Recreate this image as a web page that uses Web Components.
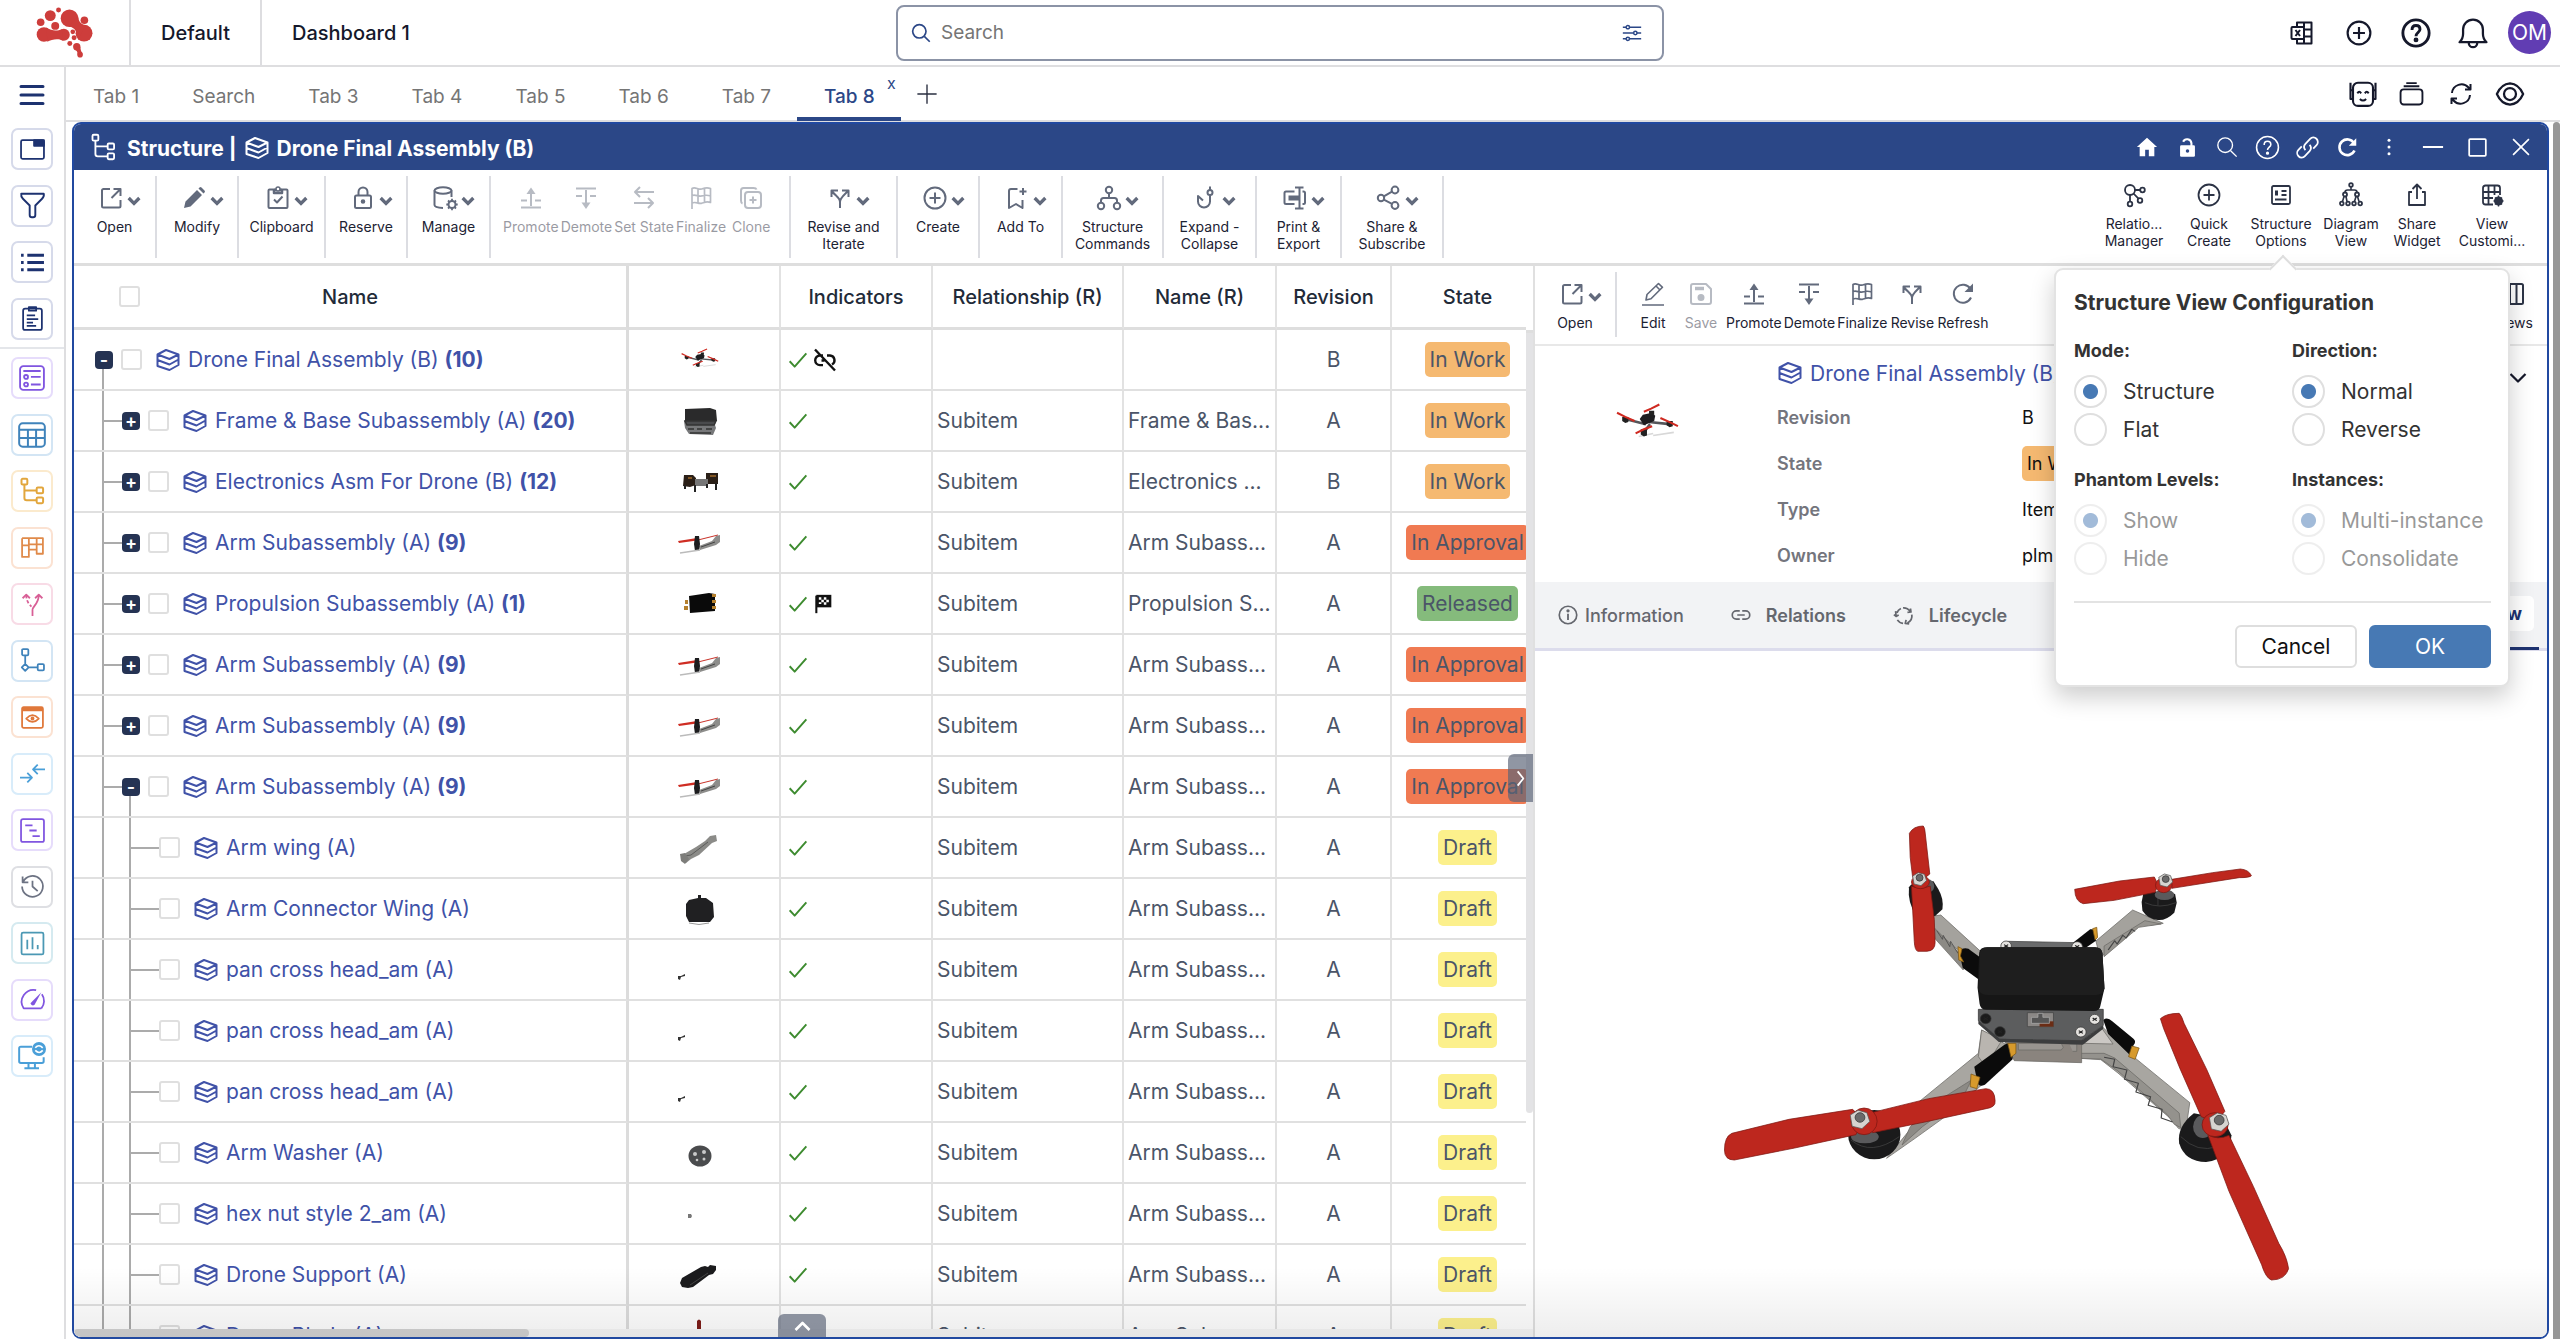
<!DOCTYPE html>
<html lang="en">
<head>
<meta charset="utf-8">
<title>Structure | Drone Final Assembly (B)</title>
<style>
html,body{margin:0;height:100%;background:#fff}
body{font-family:Inter,"Liberation Sans",sans-serif;color:#1c2233;overflow:hidden}
</style>
</head>
<body>
<plm-app></plm-app>
<script>
const RESET = `*{box-sizing:border-box}
button{font:inherit;color:inherit;background:none;border:0;padding:0;margin:0;cursor:pointer}
button:disabled{cursor:default}
a{color:inherit;text-decoration:none}`;

class Part extends HTMLElement {
  connectedCallback() {
    if (this.shadowRoot) return;
    const root = this.attachShadow({ mode: 'open' });
    const t = document.createElement('template');
    t.innerHTML = `<style>${RESET}${this.css()}</style>${this.view()}`;
    root.append(t.content.cloneNode(true));
  }
  css() { return ''; }
  view() { return ''; }
  at(n, d = '') { return this.getAttribute(n) ?? d; }
}

/* ---------- icons: 24 x 24 grid, stroke in currentColor ---------- */
const GLYPH = {
  open: '<path d="M11 3H4.500a1.500 1.500 0 0 0-1.500 1.500V20a1.500 1.500 0 0 0 1.500 1.500H20a1.500 1.500 0 0 0 1.500-1.500v-6M14.500 3h7v7M21 3.500l-8.500 8.500"/>',
  chev: '<path d="M4 12l8 8 8-8" stroke-width="5" stroke-linejoin="miter"/>',
  down: '<path d="M2 8l10 10L22 8" stroke-width="3"/>',
  up: '<path d="M4 16l8-8 8 8" stroke-width="3"/>',
  right: '<path d="M8 2l8 10-8 10" stroke-width="2.500"/>',
  pencil: '<path d="M2 22l1.500-6.500L15 4l5 5L8.500 20.500z M16.500 2.500l1-1q1-1 2 0l3 3q1 1 0 2l-1 1z" fill="currentColor" stroke="none"/>',
  clip: '<rect x="2.500" y="3.500" width="19" height="18.500" rx="1"/><path d="M8 3.500V7h8V3.500M8 4h8" stroke-width="2.500"/><circle cx="12" cy="3" r="2" fill="#fff" stroke-width="1.500"/><path d="M8 13.500l3 3 5.500-6"/>',
  lock: '<rect x="4" y="9.500" width="16" height="12.500" rx="1.500"/><path d="M7.500 9.500V6a4.500 4.500 0 0 1 9 0v3.500"/><circle cx="12" cy="15.500" r="1.300" fill="currentColor"/>',
  manage: '<ellipse cx="10" cy="4.500" rx="8.500" ry="3.200"/><path d="M1.500 4.500v14.500c0 1.500 3 2.800 8.500 3M18.500 4.500V11"/><circle cx="19" cy="18.500" r="3.500"/><path d="M19 12.800v2.200m0 7v2.200m-5.700-5.700h2.200m7 0h2.200m-9.700-4l1.500 1.500m5 5l1.500 1.500m0-8l-1.500 1.500m-5 5l-1.500 1.500" stroke-width="1.800"/>',
  promote: '<path d="M12 20V4" /><path d="M7.500 8L12 1.500 16.500 8z" fill="currentColor" stroke="none"/><path d="M2 14.500h6m8 0h6M2 21.500h20"/>',
  demote: '<path d="M12 4v14"/><path d="M7.500 16.500L12 23l4.500-6.500z" fill="currentColor" stroke="none"/><path d="M2 2.500h20M2 10h6m8 0h6"/>',
  setstate: '<path d="M22 6H3m5-5L3 6l5 5M2 17h19m-5-5l5 5-5 5"/>',
  flag: '<path d="M3 23V2.500c3.500-2 6 1.500 9.500.500 3-1 5-2 9-.500v14c-4-1.500-6 0-9 .800-3.500.700-6-2-9.500-.300M3 9.500c4-1.500 6 1.500 9.500.500s5-1.500 9 0M9 2.500v14M15.500 2.500v14" stroke-width="1.700"/>',
  clone: '<rect x="6" y="6" width="16" height="16" rx="3"/><path d="M3.500 17.500Q2 17 2 14.500V4.500Q2 2 4.500 2h10q2.500 0 3 1.500M14 10.500v7M10.500 14h7"/>',
  revise: '<path d="M12 22v-6c0-4-3-5-8-10.500M12 16c0-4 3-6 8-11M3.500 11V4.500H10M14 4.500h6.500V11"/>',
  plusc: '<circle cx="12" cy="12" r="10.500"/><path d="M12 6.500v11M6.500 12h11"/>',
  addto: '<path d="M12.500 3H6a2 2 0 0 0-2 2v17l7-4 6.500 4v-8M18 2v7m-3.500-3.500h7"/>',
  strc: '<circle cx="12" cy="4" r="3.200"/><circle cx="4" cy="20" r="3.200"/><circle cx="20" cy="20" r="3.200"/><path d="M12 7v5M4 16.500v-2q0-2.500 2.500-2.500h11q2.500 0 2.500 2.500v2"/>',
  hook: '<circle cx="16" cy="6.500" r="2.500"/><path d="M16 4V.500M16 9v6.500a6 6 0 0 1-12 0V10l5 4.500"/>',
  print: '<path d="M11.500 5.500H3Q1.500 5.500 1.500 7v9.500Q1.500 18 3 18h8.500M19.500 5.500h1Q22 5.500 22 7v9.500q0 1.500-1.500 1.500h-1M16.500 1.500v21M12 1.500h8.500M12 22.500h8.500" /><path d="M5.500 9.500h11v5h-11z" fill="currentColor" stroke="none"/>',
  share: '<circle cx="4" cy="12" r="3.200"/><circle cx="18" cy="4" r="3.400"/><circle cx="18" cy="19.500" r="3.400"/><path d="M6.800 10.400l8.200-4.700M6.800 13.600l8.200 4.200"/>',
  relman: '<circle cx="8" cy="7" r="5"/><circle cx="20.500" cy="7" r="2.300"/><circle cx="8" cy="21" r="2.300"/><circle cx="18" cy="17.500" r="2.300"/><path d="M13 7h5M8 12v6.500M11.500 10.500l5 5.200"/>',
  options: '<rect x="3" y="3" width="18" height="18" rx="1.500"/><path d="M7.500 7.500v5" stroke-width="3"/><path d="M12.500 8h5M12.500 12h5M6 16.500h11.500"/>',
  diagram: '<circle cx="12" cy="2" r="1.800"/><circle cx="6" cy="11.500" r="2"/><circle cx="18" cy="11.500" r="2"/><circle cx="2.800" cy="20.500" r="1.800"/><circle cx="9" cy="20.500" r="1.800"/><circle cx="15" cy="20.500" r="1.800"/><circle cx="21.200" cy="20.500" r="1.800"/><path d="M12 4v3M6 9.500Q6 7 8.500 7h7Q18 7 18 9.500M3.500 18.500l1.500-5m3 5l-1-5m8.500 5l1.500-5m3 5l-1.500-5" stroke-width="1.600"/>',
  shareup: '<path d="M7 9H4v13h16V9h-3M12 16V2M7.500 6L12 1.500 16.500 6"/>',
  viewcus: '<path d="M13 21.500H5.500Q3 21.500 3 19V5Q3 2.500 5.500 2.500h12Q20 2.500 20 5v7M3 9h17M3 15h10M8.500 2.500v19M14.500 2.500V12"/><circle cx="18.500" cy="18" r="3" stroke-width="3"/><path d="M18.500 12.500v11M13.500 18h10M15 14.500l7 7M22 14.500l-7 7" stroke-width="1.400"/>',
  excel: '<path d="M7 6V1.500h14.500v21H7V18M14 1.500v5M14 17.500v5M13 8.500h8.500M13 15.500h8.500M14 8v8"/><rect x="1.500" y="6" width="12.500" height="12" rx="1"/><path d="M5.500 9l4.500 6m0-6l-4.500 6"/>',
  help: '<circle cx="12" cy="12" r="10.500"/><path d="M8.800 9.500q0-3.500 3.200-3.500t3.200 3c0 2.500-3.200 2.800-3.200 5.500"/><circle cx="12" cy="17.500" r=".8" fill="currentColor"/>',
  bell: '<path d="M2.500 18.500h19c-2-2-2.500-3.500-2.500-6V9.500a7 7 0 0 0-14 0v3c0 2.500-.500 4-2.500 6zM9 19a3 3 0 0 0 6 0"/>',
  robot: '<rect x="4" y="3" width="16" height="18.500" rx="4"/><path d="M4 9H2v7h2M20 9h2v7h-2M2 9V3M22 9V3"/><path d="M7.500 11.500q1.500-2.500 3 0M13.500 11.500q1.500-2.500 3 0M9.500 16q2.500 2.500 5 0" stroke-width="1.600"/>',
  stack: '<rect x="1.500" y="8" width="21" height="14.500" rx="3"/><path d="M4.500 5h15M7 2h10"/>',
  sync: '<path d="M3 11a9.500 9.500 0 0 1 16.500-5.500L21 7M21 13a9.500 9.500 0 0 1-16.500 5.500L3 17M21.500 2v5.500H16M2.500 22v-5.500H8"/>',
  eye: '<path d="M1.500 12q3.500-8 10.500-8.500Q19 4 22.500 12 19 20 12 20.500 5 20 1.500 12z"/><circle cx="12" cy="12" r="4.800"/>',
  home: '<path d="M12 2L1 12h3v10h6v-7h4v7h6V12h3z" fill="currentColor" stroke="none"/>',
  unlock: '<rect x="3.500" y="9.500" width="17" height="13" rx="1.500" fill="currentColor" stroke="none"/><path d="M7 5.500a5 5 0 0 1 9.500 1.500v4" stroke-width="2.400"/><circle cx="12" cy="16" r="2" fill="#2b4787" stroke="none"/>',
  search: '<circle cx="10" cy="10" r="8"/><path d="M16 16l6.500 6.500"/>',
  chain: '<path d="M10 14.500a4.500 4.500 0 0 1 0-6l4.500-4.800a4.300 4.300 0 0 1 6.200 6L17.500 13M14 9.500a4.500 4.500 0 0 1 0 6l-4.500 4.800a4.300 4.300 0 0 1-6.200-6L6.500 11"/>',
  refresh: '<path d="M20 15.500A9 9 0 1 1 19.500 7"/><path d="M22 1.500V10h-8.500z" fill="currentColor" stroke="none"/>',
  dots: '<g fill="currentColor" stroke="none"><circle cx="12" cy="4" r="1.800"/><circle cx="12" cy="12" r="1.800"/><circle cx="12" cy="20" r="1.800"/></g>',
  min: '<path d="M1 12h22"/>',
  max: '<rect x="2.500" y="2.500" width="19" height="19" rx="1"/>',
  close: '<path d="M2.500 2.500l19 19M21.500 2.500l-19 19"/>',
  plus: '<path d="M12 1.500v21M1.500 12h21"/>',
  part: '<path d="M1.500 6.500L10 2l12.500 4.500L13.500 11zM1.500 6.500V18l12 4 9-5V6.500M1.500 12l12 4.500 9-5"/>',
  tree: '<rect x="3" y="1.500" width="5" height="5" rx="1"/><rect x="16" y="9" width="5.500" height="5" rx="1"/><rect x="16" y="17.500" width="5.500" height="5" rx="1"/><path d="M5.500 6.500V18q0 2 2 2H16M5.500 11.500H16"/>',
  filter: '<path d="M2 1.500h20c.500 2 0 3-1.500 4.500L14.500 12v8.500q0 2-2 2h-1q-2 0-2-2V12L3.500 6Q1.500 4 2 1.500z"/>',
  sliders: '<path d="M1 5h4m4 0h14M1 12h13m4 0h5M1 19h4m4 0h14"/><circle cx="7" cy="5" r="2"/><circle cx="16" cy="12" r="2"/><circle cx="7" cy="19" r="2"/>',
  window: '<rect x="1" y="3" width="22" height="18" rx="1.500"/><path d="M13.500 3H23v5.500h-9.500z" fill="currentColor"/>',
  list: '<path d="M7 5h16M7 12h16M7 19h16" stroke-width="2.800"/><path d="M1 5h2.500M1 12h2.500M1 19h2.500" stroke-width="2.800"/>',
  board: '<rect x="3" y="2.500" width="18" height="20.500" rx="2"/><path d="M8.500 1h7v3.500h-7zM6.500 9h8M6.500 12.500h11M6.500 16h6M6.500 19h9"/>',
  form: '<rect x="1" y="1" width="22" height="22" rx="3"/><path d="M4 5.500h16M11 11h9M11 18h9"/><circle cx="6.500" cy="11" r="1.800"/><circle cx="6.500" cy="18" r="1.800"/>',
  grid: '<rect x="1" y="2" width="22" height="20" rx="3"/><path d="M1 7.500h22M1 14.500h22M8.500 7.500V22M15.500 7.500V22"/>',
  kanban: '<path d="M2 3h20v15h-6V3M2 3v18h6.500V3M8.500 14H16M2 10h6.500M8.500 9H22"/>',
  fork: '<path d="M12 23v-6c0-3 6-6 6-14M14.500 6L18 2.500 21.500 6M2.500 6L6 2.500 9.500 6"/><path d="M6 3c0 6 3 9 5 11" stroke-dasharray="3 2"/>',
  flow: '<rect x="2" y="1" width="6" height="6" rx="1"/><rect x="17" y="15.500" width="6" height="6" rx="1"/><path d="M5 7v8.500M8.300 18.500H17M5 15.300l3.300 3.300L5 22l-3.300-3.400z"/>',
  eyebox: '<rect x="2" y="2" width="20" height="20" rx="1.500"/><path d="M2 4h20" stroke-width="4"/><path d="M6 13q6-6.500 12 0-6 6.500-12 0z"/><circle cx="12" cy="13" r="1"/>',
  merge: '<path d="M0 16h11M7 11.500l4.500 4.500L7 20.500M24 8H13M17 3.500L12.500 8l4.500 4.500"/>',
  gantt: '<rect x="1" y="1" width="22" height="22" rx="2"/><path d="M5 7h7M9 12h7M12 17.500h7"/>',
  history: '<path d="M3 7.500A10 10 0 1 1 2 12M2.500 2.500v5.500H8M12 6.500V12l5 4.500"/>',
  bars: '<rect x="1.500" y="1.500" width="21" height="21" rx="1.500"/><path d="M7 8.500v9M12 6v11.500M17 13.500v4"/>',
  gauge: '<path d="M20.500 20.500h-17A11.500 11.500 0 0 1 15.500 3M20.500 20.500A11 11 0 0 0 21 7"/><path d="M10 15.500L20.500 5 14 17q-2.500 2-4-1.500z" fill="currentColor" stroke="none"/>',
  monitor: '<path d="M12 4H2.500Q1 4 1 5.500v11Q1 18 2.500 18h18q1.500 0 1.500-1.500V13M9 18v4M14.500 18v4M5.500 22.500h12.500"/><circle cx="18" cy="6" r="6" fill="currentColor" stroke="none"/><path d="M14.800 5q3-3.500 6.400 0M21.200 7.200q-3 3.500-6.400 0" stroke="#fff" stroke-width="1.400"/>',
  menu: '<path d="M1 3.500h22M1 12h22M1 20.500h22" stroke-width="3" stroke-linecap="round"/>',
  edit: '<path d="M1 23h22M5 18l1-5.500L17.500 1.500l4 3.800L10 16.800z" stroke-width="1.600"/><path d="M15 4l4 4" stroke-width="1.600"/>',
  save: '<path d="M4 2h13l5 5v13a2 2 0 0 1-2 2H4a2 2 0 0 1-2-2V4a2 2 0 0 1 2-2z"/><path d="M6 6.500h9" stroke-width="3.500"/><circle cx="12" cy="15.500" r="2.500" fill="currentColor"/>',
  info: '<circle cx="12" cy="12" r="10.500"/><path d="M12 10.500V18" stroke-width="2.200"/><circle cx="12" cy="7" r="1" fill="currentColor"/>',
  link: '<path d="M10.500 7H6.500a5 5 0 0 0 0 10h4M13.500 7h4a5 5 0 0 1 0 10h-4M7.500 12h9"/>',
  cycle: '<path d="M3 7l.500 5.500M1 11l2.500 2 3-1.500M4.500 9A9 9 0 0 1 9 4M11.500 3.200a9 9 0 0 1 8 4M20 4l.500 4-4 .500M21.500 11a9 9 0 0 1-5 9.500M18.500 21.500l-4.500-.500 1-4M11.500 21a9 9 0 0 1-6.500-4"/>',
  check: '<path d="M2 13.500l6 6.500L22 4"/>',
  unlink: '<path d="M10 7.500H7a4.800 4.800 0 0 0 0 9.600h3M14 7.500h3a4.800 4.800 0 0 1 2 9M8.500 12.500h3M2 1.500l20 21" stroke-width="2.400"/>',
  finish: '<path d="M4 23V2" stroke-width="2.500"/><path d="M4 1h18v15H4z" fill="currentColor" stroke="none"/><path d="M7 4h3v3H7zM13 4h3v3h-3zM10 7h3v3h-3zM16 7h3v3h-3zM7 10h3v2H7zM13 10h3v3h-3z" fill="#fff" stroke="none"/>',
  views: '<rect x="2" y="2" width="20" height="20" rx="1.500"/><path d="M9 2v20M15.500 2v20"/>',
};
class UiIcon extends Part {
  css() { return `:host{display:inline-block;flex:none;width:${this.at('size', '24')}px;height:${this.at('size', '24')}px}svg{display:block;width:100%;height:100%;overflow:visible}`; }
  view() { return `<svg viewBox="0 0 24 24" fill="none" stroke="currentColor" stroke-width="${this.at('weight', '2')}" stroke-linejoin="round" aria-hidden="true">${GLYPH[this.at('name')]}</svg>`; }
}

class BrandLogo extends Part {
  css() { return ':host{display:block}svg{display:block;width:57px;height:51px}'; }
  view() {
    return `<svg viewBox="106 22 172 154" fill="#cd3d3b" role="img" aria-label="Home">
    <circle cx="174" cy="31" r="7.500"/><circle cx="149" cy="48" r="16.500"/><circle cx="120" cy="68" r="11.500"/><circle cx="164" cy="79" r="12"/><circle cx="252" cy="62" r="11.500"/>
    <circle cx="207" cy="56" r="26.500"/><circle cx="251" cy="101" r="25.500"/><path d="M233 50c2 16 8 24 22 27l-20 40c-8-20-9-32-30-36z"/>
    <circle cx="130" cy="105" r="22"/><circle cx="190" cy="106" r="18"/><path d="M138 84c16 12 34 10 46 5l4 35c-16-8-34-4-48 3z"/>
    <circle cx="217" cy="97" r="7"/><circle cx="221" cy="115" r="7.500"/><circle cx="208" cy="132" r="7.500"/>
    <circle cx="229" cy="142" r="11"/><circle cx="239" cy="166" r="8.500"/><path d="M221 149c7 3 10 8 11 16l14-3c-4-6-6-12-6-20z"/></svg>`;
  }
}

class AppHeader extends Part {
  css() {
    return `:host{display:grid;grid-template-columns:1fr 30% 1fr;align-items:center;height:67px;border-bottom:2px solid #dedee0;color:#15182b}
    .left,.right{display:flex;align-items:center;height:100%}
    .right{justify-content:flex-end;padding-right:2px}
    .logo{width:131px;height:100%;display:flex;align-items:center;justify-content:center;border-right:2px solid #dddde0}
    .left a{display:flex;align-items:center;height:100%;padding:0 30px;font-size:20px;font-weight:500}
    .left a.first{border-right:2px solid #dddde0}
    label{display:flex;align-items:center;gap:10px;height:56px;padding:0 20px 0 13px;border:2px solid #8b93a6;border-radius:8px;color:#2b4787}
    input{flex:1;border:0;outline:0;background:none;font:400 19px Inter,sans-serif;color:#222;padding:0}
    input::placeholder{color:#757575;opacity:1}
    button{width:57px;height:57px;display:flex;align-items:center;justify-content:center}
    .avatar span{width:43px;height:43px;border-radius:50%;background:#613db3;color:#fff;font-size:21px;display:flex;align-items:center;justify-content:center}`;
  }
  view() {
    return `<div class="left"><div class="logo"><brand-logo></brand-logo></div><a class="first" href="#">Default</a><a href="#">Dashboard 1</a></div>
    <label><ui-icon name="search" size="20" weight="2"></ui-icon><input type="search" placeholder="Search" aria-label="Search"><ui-icon name="sliders" size="20" weight="1.800"></ui-icon></label>
    <div class="right"><button aria-label="Export"><ui-icon name="excel" size="24"></ui-icon></button><button aria-label="Create"><ui-icon name="plusc" size="26"></ui-icon></button><button aria-label="Help"><ui-icon name="help" size="30" weight="2.300"></ui-icon></button><button aria-label="Notifications"><ui-icon name="bell" size="34" weight="1.600"></ui-icon></button><button class="avatar"><span>OM</span></button></div>`;
  }
}

class SideNav extends Part {
  css() {
    return `:host{display:flex;flex-direction:column;align-items:center;width:66px;border-right:2px solid #dedee0;padding-top:15px;color:#1d3270}
    .menu{height:26px;display:flex;align-items:center}
    .group{display:flex;flex-direction:column;justify-content:space-between}
    .top{height:212px;margin-top:20px}
    hr{width:100%;border:0;border-top:2px solid #e4e6ea;margin:7px 0 8px}
    .rest{height:720px}
    .group button{width:42px;height:42px;border:2px solid var(--b);border-radius:7px;color:var(--c);display:flex;align-items:center;justify-content:center}`;
  }
  view() {
    const b = ([n, c, l, s = 25]) => `<button style="--c:${c};--b:${l}" aria-label="${n}"><ui-icon name="${n}" size="${s}" weight="1.700"></ui-icon></button>`;
    const top = [['window', '#1d3270', '#d6daea'], ['filter', '#1d3270', '#d6daea', 27], ['list', '#1d3270', '#d6daea'], ['board', '#1d3270', '#d6daea']];
    const rest = [['form', '#8055e0', '#e6dcfb', 26], ['grid', '#3f83bb', '#d3e5f4', 28], ['tree', '#e2a63c', '#fbeacd', 28], ['kanban', '#e08a4a', '#fbe2d2'],
      ['fork', '#d85f96', '#f8dbe6'], ['flow', '#3f83bb', '#d3e5f4'], ['eyebox', '#e0783a', '#fbe2d2'], ['merge', '#4a9fd8', '#d8ecfa'], ['gantt', '#8055e0', '#e6dcfb'],
      ['history', '#6d7383', '#dedfe3'], ['bars', '#4b98b4', '#d5eaf0'], ['gauge', '#8055e0', '#e6dcfb'], ['monitor', '#4a9fd8', '#d8ecfa', 28]];
    return `<button class="menu" aria-label="Menu"><ui-icon name="menu"></ui-icon></button><div class="group top">${top.map(b).join('')}</div><hr><div class="group rest">${rest.map(b).join('')}</div>`;
  }
}

class TabStrip extends Part {
  css() {
    return `:host{display:flex;height:55px;border-bottom:2px solid #dedee0;font-size:19px;color:#757575}
    a{position:relative;padding:8px 26px 0 27px;display:flex;align-items:center;border-bottom:4px solid transparent;margin-bottom:-1px}
    a[aria-current]{color:#2b4787;border-bottom-color:#2b4787;font-weight:500}
    a button{position:absolute;right:5px;top:6px;font-size:16px;line-height:20px;font-weight:400}
    .add{padding:0 15px;color:#2a2f40;display:flex;align-items:center}
    .right{margin-left:auto;display:flex;padding-right:26px;color:#15182b}
    .right button{width:49px;display:flex;align-items:center;justify-content:center}`;
  }
  view() {
    return `${['Tab 1', 'Search', 'Tab 3', 'Tab 4', 'Tab 5', 'Tab 6', 'Tab 7'].map(t => `<a href="#">${t}</a>`).join('')}<a href="#" aria-current="page">Tab 8<button aria-label="Close tab">x</button></a>
    <button class="add" aria-label="Add tab"><ui-icon name="plus" size="22" weight="1.500"></ui-icon></button>
    <div class="right"><button aria-label="Assistant"><ui-icon name="robot" size="30" weight="1.700"></ui-icon></button><button aria-label="Collections"><ui-icon name="stack" size="25" weight="1.800"></ui-icon></button><button aria-label="Refresh"><ui-icon name="sync"></ui-icon></button><button aria-label="Preview"><ui-icon name="eye" size="30" weight="1.800"></ui-icon></button></div>`;
  }
}

class WidgetTitle extends Part {
  css() {
    return `:host{display:flex;align-items:center;height:46px;background:#2b4787;color:#fff;padding:0 4px 0 15px}
    h1{display:flex;align-items:center;gap:8px;margin:0 auto 0 10px;padding-top:2px;font-size:21px;font-weight:700}
    button{height:40px;width:44px;display:flex;align-items:center;justify-content:center}
    button.n{width:40px}`;
  }
  view() {
    const n = (i, s = 22, w = 2) => `<button class="n" aria-label="${i}"><ui-icon name="${i}" size="${s}" weight="${w}"></ui-icon></button>`;
    const w = (i, s = 20) => `<button aria-label="${i}"><ui-icon name="${i}" size="${s}"></ui-icon></button>`;
    return `<ui-icon name="tree" size="28" weight="1.600"></ui-icon><h1><span>Structure |</span><ui-icon name="part"></ui-icon><span>Drone Final Assembly (B)</span></h1>
    ${n('home')}${n('unlock', 21)}${n('search', 22, 1.500)}${n('help', 25, 1.500)}${n('chain', 25, 1.700)}${n('refresh', 21, 3)}${w('dots')}${w('min', 22)}${w('max', 21)}${w('close')}`;
  }
}

class ToolButton extends Part {
  css() {
    return `:host{display:block;min-width:48px}
    button{display:flex;flex-direction:column;align-items:center;width:100%;padding:0 1px;font-size:14px;line-height:17px;color:#1c2233;text-align:center}
    .i{display:flex;align-items:center;height:24px;margin-bottom:8px;color:${this.at('tone', '#626a7c')};gap:3px}
    .menu{padding-left:12px}
    button:disabled{opacity:.45}`;
  }
  view() {
    const menu = this.hasAttribute('menu');
    return `<button ${this.hasAttribute('disabled') ? 'disabled' : ''}><span class="i ${menu ? 'menu' : ''}"><ui-icon name="${this.at('icon')}" weight="${this.at('weight', '2')}"></ui-icon>${menu ? '<ui-icon name="chev" size="16"></ui-icon>' : ''}</span><span class="label"><slot></slot></span></button>`;
  }
}

class MainToolbar extends Part {
  css() {
    return `:host{display:flex;justify-content:space-between;height:96px;border-bottom:3px solid #dedede;background:#fff}
    .left{display:grid;grid-template-columns:83px 82px 87px 82px 83px 300px 107px 82px 83px 101px 93px 85px 102px;padding:6px 0 5px}
    .left>div{display:flex;justify-content:center;border-right:2px solid #dcdde2;padding-top:10px}
    .left .wide{justify-content:flex-start;padding-left:11px}
    .right{display:grid;grid-template-columns:78px 72px 72px 68px 64px 86px;padding:13px 12px 0 0}`;
  }
  view() {
    const g = [['open', 'Open'], ['pencil', 'Modify'], ['clip', 'Clipboard'], ['lock', 'Reserve'], ['manage', 'Manage'], 0, ['revise', 'Revise and<br>Iterate'], ['plusc', 'Create'], ['addto', 'Add To'], ['strc', 'Structure<br>Commands'], ['hook', 'Expand -<br>Collapse'], ['print', 'Print &amp;<br>Export'], ['share', 'Share &amp;<br>Subscribe']];
    const dis = [['promote', 'Promote'], ['demote', 'Demote'], ['setstate', 'Set State'], ['flag', 'Finalize'], ['clone', 'Clone']];
    const r = [['relman', 'Relatio...<br>Manager'], ['plusc', 'Quick<br>Create'], ['options', 'Structure<br>Options'], ['diagram', 'Diagram<br>View'], ['shareup', 'Share<br>Widget'], ['viewcus', 'View<br>Customi...']];
    return `<div class="left">${g.map(x => x ? `<div><tool-button menu icon="${x[0]}">${x[1]}</tool-button></div>` : `<div class="wide">${dis.map(d => `<tool-button disabled icon="${d[0]}">${d[1]}</tool-button>`).join('')}</div>`).join('')}</div>
    <div class="right">${r.map(x => `<tool-button tone="#2c3345" weight="1.800" icon="${x[0]}">${x[1]}</tool-button>`).join('')}</div>`;
  }
}

class StateBadge extends Part {
  css() {
    const c = { 'In Work': '#f5b971', 'In Approval': '#f07a52', Released: '#85bb7c', Draft: '#fcf08c' }[this.textContent.trim()];
    return `:host{display:inline-block;background:${c};border-radius:5px;padding:0 5px;line-height:35px;white-space:nowrap}`;
  }
  view() { return '<slot></slot>'; }
}

/* ---------- small part previews ---------- */
const MINI_DRONE = `<path d="M36 30l20-3M22 31l14-3" stroke="#d8d8d8" stroke-width="1.500"/><path d="M9 14l20 5M52 19l-20-2M27 27l6-8M35 8l-5 8" stroke="#55565a" stroke-width="2.500" fill="none"/><path d="M23 14l3-4 9-2 3 3-1 5-10 4z" fill="#1d1d20"/><path d="M6 12h6v5l-3 1-3-2zM49 16h6v5l-3 1-3-2zM24 24h6v6l-3 1-3-2zM32 6h5v4h-5z" fill="#222"/>
<path d="M1 8l8 4 9 4M43 13l9 4 8 4M19 28l8-4 8-3M27 7l7-3 8-4" stroke="#cf2a21" stroke-width="2" fill="none"/>`;
const THUMB = {
  drone: `<g transform="translate(11 14) scale(.62 .58)">${MINI_DRONE}</g>`,
  frame: '<path d="M15 13l25-1 6 2 1 11H15z" fill="#2a2a2b"/><path d="M14 25h32l-1 4 1 3-3 7-24-1-4-6z" fill="#77787a"/><path d="M15 25h31l-2 4H17zM18 33h6m3 0h5m4 0h6M20 37h21" fill="#4a4b4d" stroke="#333" stroke-width="1.500"/>',
  elec: '<path d="M14 18h9l3 3v7l-6 2-7-1zM36 16h12v11H36z" fill="#2a1f17"/><path d="M25 22h13v7H25z" fill="#777"/><path d="M15 28v4M25 28v7M37 27v4M46 26v7" stroke="#222" stroke-width="2"/><path d="M18 21h4M40 19h6" stroke="#a06a28" stroke-width="1.500"/>',
  arm: '<path d="M28 22l20-5" stroke="#c9332a" stroke-width="1"/><path d="M8 23l19-3v2.500L9 25z" fill="#cf2d23"/><path d="M29 28l13-5 4-5 4-1v7l-4 3-16 5z" fill="#8d8d8b"/><path d="M31 29l14-5" stroke="#444" stroke-width="1"/><path d="M25 18h4l1 8-1 7h-4l-1-7z" fill="#1c1c1e"/><path d="M10 35l20-3" stroke="#bbb" stroke-width="1.500"/>',
  prop: '<path d="M19 17l20-3 6 1v17l-25 2z" fill="#0a0a0a"/><path d="M15 21h3v4h-3zm-1 6h4v4h-4zM42 15h4v3h-4zm0 6h4v3h-4zm0 6h4v3h-4z" fill="#b5802d"/>',
  wing: '<path d="M11 32l3-1 12-7 9-6 5-5 6-1 1 6-5 2-13 12-8 4-5 4-4-2z" fill="#8b8b88"/><path d="M15 33l6-1 17-13" stroke="#5c5c5a" fill="none"/><path d="M10 31l5-1 4 6-4 5-4-3z" fill="#7d7d7a"/>',
  conn: '<path d="M28 11h3v3h5l7 5 1 14-4 5H19l-3-6V20l3-4 9-2z" fill="#202022"/><path d="M19 39q10 3 20 0" stroke="#999" fill="none"/>',
  screw: '<path d="M8 31h3l4-2v2l-4 1-1 3-2-1z" fill="#333"/>',
  washer: '<ellipse cx="30" cy="28" rx="11.500" ry="10.500" fill="#4a4b4d"/><g fill="#c9c9c9"><circle cx="25" cy="26" r="2"/><circle cx="34" cy="24" r="2"/><circle cx="27" cy="32" r="1.300"/><circle cx="34" cy="31" r="1.500"/></g>',
  nut: '<path d="M18 25h3l1 2-1 2h-3z" fill="#777"/>',
  support: '<path d="M12 28l19-11 4-1 3 1 2-2 6 1v4l-3 4-4 1-16 12-5 1-6-1-2-4z" fill="#1b1b1d"/><path d="M20 35l18-12" stroke="#444"/>',
  blade: '<path d="M27 10q2-3 4 0v20h-4z" fill="#7e1d18"/>',
};
class PartThumb extends Part {
  css() { return ':host{display:block;width:68px;height:50px;margin:0 auto}svg{display:block}'; }
  view() { return `<svg width="68" height="50" viewBox="0 0 68 50">${THUMB[this.at('kind')]}</svg>`; }
}

class StructureTable extends Part {
  css() {
    return `:host{display:flex;flex-direction:column;min-width:0;background:#fff}
    .area{display:flex;flex:1;min-height:0}
    .clip{flex:1;min-width:0;overflow:hidden}
    .vbar{width:7px}
    .vbar::before{content:"";display:block;height:64px;border-bottom:3px solid #dedede}
    .vbar i{display:block;height:780px;background:#e3e3e5;border-radius:0 0 4px 4px}
    .hbar{height:8px;background:#f6f6f6}
    .hbar i{display:block;width:455px;height:8px;border-radius:4px;background:#d3d3d3}
    table{table-layout:fixed;width:1469px;border-collapse:separate;border-spacing:0;font-size:21px;color:#4b5568}
    th{height:64px;padding:0;font-size:20px;font-weight:500;color:#222a38;border-bottom:3px solid #dedede;border-right:2px solid #e2e2e2}
    td{height:61px;padding:0 4px;border-bottom:2px solid #e0e0e0;border-right:2px solid #e2e2e2;white-space:nowrap;overflow:hidden;text-overflow:ellipsis}
    th:first-child,td:first-child{border-right:3px solid #dcdcdc}
    th:last-child,td:last-child{border-right:0}
    .c{text-align:center}
    .head{display:flex;align-items:center;padding-left:45px}
    .head span{flex:1;padding-right:66px}
    input{appearance:none;flex:none;width:21px;height:21px;margin:0;border:2px solid #dfdfdf;border-radius:3px;background:#fff}
    td.name{padding:0;overflow:visible;text-overflow:clip;--l:linear-gradient(#ababab,#ababab)}
    .n{display:flex;align-items:center;color:#4052a8}
    .n button{flex:none;width:18px;height:18px;border-radius:4px;background:#253353;color:#fff;font-size:18px;line-height:16px;font-weight:600;margin-right:8px}
    .n a{display:flex;align-items:center;gap:8px;margin-left:14px}
    .n a span{white-space:pre}
    .l1{background:var(--l) 28px 100%/2px 50% no-repeat}
    .l2{background:var(--l) 28px 0/2px 100% no-repeat,var(--l) 28px 50%/20px 2px no-repeat}
    .l2.x{background:var(--l) 28px 0/2px 100% no-repeat,var(--l) 28px 50%/20px 2px no-repeat,var(--l) 55px 100%/2px 50% no-repeat}
    .l3{background:var(--l) 28px 0/2px 100% no-repeat,var(--l) 55px 0/2px 100% no-repeat,var(--l) 55px 50%/30px 2px no-repeat}
    .l1 .n{padding-left:21px}.l2 .n{padding-left:48px}.l3 .n{padding-left:85px}
    .ind{display:flex;gap:5px;align-items:center;padding-left:3px;color:#111}
    .ok{color:#3d8b2f}`;
  }
  view() {
    const S = 'Arm Subass...', A = 'Arm Subassembly (A)';
    const rows = [
      [1, 'Drone Final Assembly (B)', 10, 'drone', '', 'B', 'In Work', 'unlink'],
      [2, 'Frame &amp; Base Subassembly (A)', 20, 'frame', 'Frame &amp; Bas...', 'A', 'In Work'],
      [2, 'Electronics Asm For Drone (B)', 12, 'elec', 'Electronics ...', 'B', 'In Work'],
      [2, A, 9, 'arm', S, 'A', 'In Approval'],
      [2, 'Propulsion Subassembly (A)', 1, 'prop', 'Propulsion S...', 'A', 'Released', 'finish'],
      [2, A, 9, 'arm', S, 'A', 'In Approval'], [2, A, 9, 'arm', S, 'A', 'In Approval'], [2, A, 9, 'arm', S, 'A', 'In Approval', '', 1],
      [3, 'Arm wing (A)', 0, 'wing'], [3, 'Arm Connector Wing (A)', 0, 'conn'], [3, 'pan cross head_am (A)', 0, 'screw'], [3, 'pan cross head_am (A)', 0, 'screw'],
      [3, 'pan cross head_am (A)', 0, 'screw'], [3, 'Arm Washer (A)', 0, 'washer'], [3, 'hex nut style 2_am (A)', 0, 'nut'], [3, 'Drone Support (A)', 0, 'support'], [3, 'Drone Blade (A)', 0, 'blade'],
    ];
    const row = ([l, name, n, kind, rn = S, rev = 'A', st = 'Draft', extra = '', x = 0]) => `<tr>
      <td class="name l${l}${x ? ' x' : ''}"><div class="n">${l < 3 ? `<button>${l === 1 || x ? '-' : '+'}</button>` : ''}<input type="checkbox" aria-label="Select ${name}"><a href="#"><ui-icon name="part"></ui-icon><span>${name}${n ? ` <b>(${n})</b>` : ''}</span></a></div></td>
      <td><part-thumb kind="${kind}"></part-thumb></td>
      <td><div class="ind"><ui-icon class="ok" name="check" size="20" weight="2.300"></ui-icon>${extra ? `<ui-icon name="${extra}" size="${extra === 'finish' ? 20 : 24}"></ui-icon>` : ''}</div></td>
      <td>${l > 1 ? 'Subitem' : ''}</td><td>${rn}</td><td class="c">${rev}</td><td class="c"><state-badge>${st}</state-badge></td></tr>`;
    return `<div class="area"><div class="clip"><table>
      <colgroup><col style="width:555px"><col style="width:152px"><col style="width:152px"><col style="width:191px"><col style="width:153px"><col style="width:115px"><col style="width:151px"></colgroup>
      <thead><tr><th><div class="head"><input type="checkbox" aria-label="Select all"><span>Name</span></div></th><th></th><th>Indicators</th><th>Relationship (R)</th><th>Name (R)</th><th>Revision</th><th>State</th></tr></thead>
      <tbody>${rows.map(row).join('')}</tbody></table></div><div class="vbar"><i></i></div></div><div class="hbar"><i></i></div>`;
  }
}

class DroneView extends Part {
  css() { return ':host{display:block}svg{display:block;width:640px;height:500px}'; }
  view() {
    const screw = (x, y, f = '#e4e2df') => `<ellipse cx="${x}" cy="${y}" rx="13" ry="15" fill="${f}" stroke="#333" stroke-width="2"/><path d="M${x - 5} ${y - 4}l10 8m0-8l-10 8" stroke="#222" stroke-width="3"/>`;
    const nut = (x, y, r) => `<path d="M${x - r} ${y - r * .7}l${r * .8} ${-r * .6} ${r * .9} ${r * .3} ${r * .3} ${r * 1.1} ${-r * .8} ${r * .9} ${-r} ${-r * .3}z" fill="#d6d4d0" stroke="#555" stroke-width="2"/><ellipse cx="${x}" cy="${y - r * .4}" rx="${r * .5}" ry="${r * .6}" fill="#6a6a6a" stroke="#333" stroke-width="2"/>`;
    return `<svg viewBox="0 0 1568 1500" preserveAspectRatio="none" role="img" aria-label="Drone Final Assembly">
    <g stroke="#6b6a66" stroke-width="2" stroke-linejoin="round">
      <path d="M560 350l30-5 100 112v60l-60-70-60-60z" fill="#a4a29d"/><path d="M575 385l70 85v40l-70-95z" fill="#8c8a85"/><path d="M580 392l14 26 2-12 16 34 2-16 18 36" fill="none" stroke="#444"/>
      <path d="M1060 330l75 40-30 6-20-8-105 105-10-50z" fill="#a4a29d"/><path d="M1090 362l-100 76v32l85-88 55-10z" fill="#96948f"/><path d="M1000 450l16-28 6 10 14-26 8 8 14-26 8 6" fill="none" stroke="#444" stroke-width="3"/>
      <path d="M690 690l-8 70-145 145-20 80-60 90 70-60 85-75 110-120 50-70z" fill="#a8a6a1"/><path d="M600 890l65-50-20 50-100 90-50 55 20-55z" fill="#8c8a85"/>
      <path d="M930 735l58-52 62 75 150 150-10 85-18-8-18-28-130-138-42-40-52-4z" fill="#a8a6a1"/><path d="M932 760h58l26 14 158 165 4 44-16-10-18-30-120-130-42-36-50-2z" fill="#94928d"/>
      <path d="M990 772l26 6-4 22 34 10-6 28 34 12-6 26 36 14-6 26 34 12-2 26 28 12" fill="none" stroke="#444" stroke-width="3"/>
      <path d="M940 730l44-46 28 48z" fill="#cbc8c4"/><path d="M690 690l50 30-40 80-18-30z" fill="#b9b5b0"/>
      <path d="M745 720h190v68l-165-6z" fill="#8a847e"/><path d="M780 730h105l5 12-5 8H780zM905 732h18v22h-10" fill="#999590"/>
    </g>
    <g fill="#0b0b0b"><path d="M640 448q14-8 24 4l34 30v70l-54-48-10-50z"/><path d="M910 432l46-44q14-2 16 12l-2 22-30 26z"/><path d="M988 660q10-10 22 4l52 52q8 8 0 20l-8 30-54-64z"/><path d="M672 800l74-66q16-10 20 6v38l-68 76q-14 8-18-4z"/></g>
    <g fill="#d79a2c" stroke="#7c5716" stroke-width="2"><path d="M632 440l10 6-4 22 8 18-12-6z"/><path d="M962 386l10-4 2 30-6 8z"/><path d="M1058 738l18 6-10 34-16-8z"/><path d="M664 822l22 10-8 34-16-6z"/><path d="M754 730h20v30l-12 12z"/></g>
    <path d="M740 430l16-6 170 4 14 14-20 10H740z" fill="#6a6b6c" stroke="#444" stroke-width="2"/>${screw(750, 438)}${screw(924, 440)}
    <path d="M682 628h306v48l-54 46-200-4-52-56z" fill="#5c5d5e" stroke="#333" stroke-width="2"/><path d="M682 662l52 54 200 6 54-46v10l-50 48-206-8-50-54z" fill="#3c3d3e"/>
    <path d="M704 442h264q16 0 18 18l5 105-10 52q-2 16-16 16l-264-4q-14 0-16-18l-5-48 4-105q2-16 20-16z" fill="#161616"/>
    <path d="M704 442h264q16 0 18 18l5 105q-2 18-20 20H706q-18 0-24-16l4-110q2-16 18-17z" fill="#1e1e1e"/>
    ${screw(700, 656, '#1b1b1b')}${screw(735, 695, '#1b1b1b')}${screw(967, 658)}${screw(933, 696)}
    <path d="M802 638h64v42h-64z" fill="#8b8886" stroke="#444" stroke-width="2"/><path d="M832 664h34v16h-34z" fill="#6b2d15"/><path d="M812 652h16v-12h12v12h16v18h-44z" fill="#555" stroke="#aaa" stroke-width="2"/>
    <g fill="#1a1a1b"><path d="M512 262q8-22 60-18l12 24q14 30 10 60l-18 20h-46q-22-40-18-86z"/><path d="M1086 282q40-16 78 0l4 26-6 30q-20 24-40 22-24-2-38-28l-2-26z"/><ellipse cx="427" cy="1004" rx="64" ry="74"/><path d="M1210 940q-42 40-36 90 14 56 66 56 60-8 62-80l-20-50z"/></g>
    <g fill="none" stroke="#444" stroke-width="2"><path d="M1090 308q36 20 76 0M1122 282v34M370 1020q50 50 118-10M1178 1010q40 50 90 30"/></g>
    <g fill="#5a5a5c"><ellipse cx="558" cy="258" rx="16" ry="20"/><ellipse cx="1138" cy="284" rx="24" ry="16"/><ellipse cx="404" cy="1010" rx="34" ry="20"/><ellipse cx="1232" cy="980" rx="24" ry="34"/></g>
    <g fill="#bd271e" stroke="#7d1712" stroke-width="2" stroke-linejoin="round">
      <path d="M513 100q10-22 34-22 4 4 5 24l11 120q-20 24-42 10l-6-60z"/><path d="M518 258q20 12 46 0l10 100 2 70q0 24-20 26h-22q-8-2-9-30z"/>
      <path d="M918 268l110-25 85-12q12 22 2 46l-100 24-76 10q-20-6-21-43z"/><path d="M1156 238l100-20 68-11q20 2 27 20-4 6-30 6l-165 32z"/>
      <path d="M78 1000l140-42 156-30q30 30 8 76l-150 40-148 36q-24 0-24-30 0-40 18-50z"/><path d="M420 938l140-42 140-30q22 0 23 36 2 20-22 24l-150 40-128 32q-18-30-3-60z"/>
      <path d="M1128 656q14-16 46-16 6 6 12 30l56 140 44 124q-20 40-58 16l-52-144-40-120z"/><path d="M1244 1004q24 18 52 2l60 154 62 170q20 40 24 76-8 34-42 34-14-6-24-46l-80-220z"/>
      <ellipse cx="540" cy="246" rx="22" ry="20"/><ellipse cx="1136" cy="256" rx="20" ry="22"/><ellipse cx="402" cy="964" rx="32" ry="40"/><ellipse cx="1262" cy="974" rx="32" ry="36"/>
    </g>
    ${nut(538, 240, 17)}${nut(1141, 244, 17)}${nut(392, 962, 24)}${nut(1272, 970, 24)}
    </svg>`;
  }
}

class DetailPanel extends Part {
  css() {
    return `:host{display:flex;flex-direction:column;min-width:0;border-left:2px solid #e0e0e0;background:#fff}
    .bar{display:flex;height:80px;padding:6px 0 7px;border-bottom:2px solid #e8e8e8}
    .bar>div{display:flex;padding-top:10px}
    .first{width:82px;justify-content:center;border-right:2px solid #dcdde2}
    .acts{padding-left:12px}.end{margin-left:auto;padding-right:10px}
    .info{display:grid;grid-template-columns:242px 1fr auto;height:236px}
    .info svg{margin:56px 0 0 81px;width:64px;height:36px}
    h2{display:flex;align-items:center;gap:8px;height:26px;margin:14px 0 8px 1px;font-size:21px;font-weight:400;color:#4052a8}
    dl{display:grid;grid-template-columns:245px 1fr;grid-auto-rows:46px;align-items:center;margin:0;font-size:18px}
    dt{font-weight:600;color:#74757d}dd{margin:0;color:#111}
    .toggle{height:26px;margin:20px 20px 0 0;color:#15182b}
    nav{display:flex;align-items:center;height:69px;background:#f2f3f5;border-bottom:3px solid #dcdcec;font-size:18px;font-weight:500;color:#65676e;padding-left:23px}
    nav a{display:flex;align-items:center;gap:7px;margin-right:47px}
    nav a.g{gap:15px;font-weight:600}
    nav .on{margin:0 8px 0 auto;height:69px;border-bottom:3px solid #1d3270;color:#1d3270;font-weight:700;padding:0 5px}
    nav .on span{background:#fff;border-radius:5px;padding:0 12px;line-height:35px}
    .stage{padding:149px 0 0 165px}`;
  }
  view() {
    const t = (i, l, a = '') => `<tool-button icon="${i}" ${a}>${l}</tool-button>`;
    return `<div class="bar"><div class="first">${t('open', 'Open', 'menu')}</div><div class="acts">${t('edit', 'Edit')}${t('save', 'Save', 'disabled')}${t('promote', 'Promote')}${t('demote', 'Demote')}${t('flag', 'Finalize')}${t('revise', 'Revise')}${t('refresh', 'Refresh')}</div><div class="end">${t('views', 'Views', 'tone="#2c3345"')}</div></div>
    <div class="info"><svg viewBox="0 -2 62 34">${MINI_DRONE}</svg><div><h2><ui-icon name="part"></ui-icon>Drone Final Assembly (B)</h2><dl><dt>Revision</dt><dd>B</dd><dt>State</dt><dd><state-badge>In Work</state-badge></dd><dt>Type</dt><dd>Item</dd><dt>Owner</dt><dd>plm</dd></dl></div><button class="toggle" aria-label="Collapse"><ui-icon name="down" size="18"></ui-icon></button></div>
    <nav><a href="#"><ui-icon name="info" size="20"></ui-icon>Information</a><a class="g" href="#"><ui-icon name="link" size="20"></ui-icon>Relations</a><a class="g" href="#"><ui-icon name="cycle" size="21"></ui-icon>Lifecycle</a><a class="on" href="#"><span>View</span></a></nav>
    <div class="stage"><drone-view></drone-view></div>`;
  }
}

class ConfigPopover extends Part {
  css() {
    return `:host{display:block;width:456px;background:#fff;border:2px solid #e3e3e3;border-radius:9px;padding:19px 17px 17px 18px;box-shadow:0 10px 24px rgba(0,0,0,.2);color:#333;font-size:21px}
    .tip{position:absolute;left:217px;top:-11px;width:20px;height:20px;background:#fff;border:solid #dedede;border-width:2px 0 0 2px;transform:rotate(45deg)}
    h3{margin:0;font-size:21px;line-height:28px;font-weight:700}
    .grid{display:grid;grid-template-columns:218px 1fr;padding-bottom:26px;border-bottom:2px solid #e3e3e3;margin-bottom:22px}
    fieldset{border:0;margin:22px 0 0;padding:0;min-width:0}
    legend{padding:0;margin-bottom:12px;font-size:18px;line-height:24px;font-weight:700}
    label{display:flex;align-items:center;gap:16px;height:33px}
    label+label{margin-top:5px}
    input{appearance:none;margin:0;flex:none;width:33px;height:33px;border:2px solid #dfdfdf;border-radius:50%}
    input:checked{background:radial-gradient(circle,#4779b4 7px,transparent 8px)}
    fieldset:disabled label{opacity:.5}
    .foot{display:flex;justify-content:flex-end;gap:12px}
    .foot button{width:122px;height:43px;border:2px solid #dedede;border-radius:6px;color:#111}
    .foot .ok{background:#4779b4;border-color:#4779b4;color:#fff}`;
  }
  view() {
    const f = (title, n, a, b, dis = '') => `<fieldset ${dis}><legend>${title}</legend><label><input type="radio" name="${n}" checked>${a}</label><label><input type="radio" name="${n}">${b}</label></fieldset>`;
    return `<div class="tip"></div><h3>Structure View Configuration</h3><div class="grid">${f('Mode:', 'mode', 'Structure', 'Flat')}${f('Direction:', 'dir', 'Normal', 'Reverse')}${f('Phantom Levels:', 'ph', 'Show', 'Hide', 'disabled')}${f('Instances:', 'inst', 'Multi-instance', 'Consolidate', 'disabled')}</div><div class="foot"><button>Cancel</button><button class="ok">OK</button></div>`;
  }
}

class StructureWidget extends Part {
  css() {
    return `:host{position:relative;display:flex;flex-direction:column;min-width:0;min-height:0;border:2px solid #2149a0;border-radius:9px;overflow:hidden;background:#fff}
    .body{flex:1;min-height:0;display:grid;grid-template-columns:1459px minmax(0,1fr)}
    structure-table,detail-panel{min-height:0}
    .fade{position:absolute;left:0;right:0;bottom:0;height:70px;background:linear-gradient(transparent,rgba(0,0,0,.07));pointer-events:none}
    config-popover{position:absolute;right:37px;top:144px}
    .h{position:absolute;background:rgba(92,100,120,.68);color:#fff;display:flex;align-items:center;justify-content:center}
    .h.r{left:1434px;top:630px;width:25px;height:48px;border-radius:6px 0 0 6px}
    .h.b{left:704px;bottom:-2px;width:48px;height:25px;border-radius:6px 6px 0 0}`;
  }
  view() {
    return `<widget-title></widget-title><main-toolbar></main-toolbar><div class="body"><structure-table></structure-table><detail-panel></detail-panel></div>
    <div class="fade"></div><button class="h r" aria-label="Collapse panel"><ui-icon name="right" size="17"></ui-icon></button><button class="h b" aria-label="Expand panel"><ui-icon name="up" size="21"></ui-icon></button><config-popover></config-popover>`;
  }
}

class PlmApp extends Part {
  css() {
    return `:host{display:flex;flex-direction:column;height:100vh}
    .row{display:flex;flex:1;min-height:0}
    .main{flex:1;min-width:0;display:flex;flex-direction:column}
    .page{flex:1;min-height:0;display:flex;padding-left:6px}
    structure-widget{flex:1}
    .bar{width:7px;margin-left:4px;background:#979797;border-radius:4px 4px 0 0}`;
  }
  view() { return `<app-header></app-header><div class="row"><side-nav></side-nav><div class="main"><tab-strip></tab-strip><div class="page"><structure-widget></structure-widget><div class="bar"></div></div></div></div>`; }
}

for (const [tag, c] of Object.entries({ 'ui-icon': UiIcon, 'brand-logo': BrandLogo, 'state-badge': StateBadge, 'part-thumb': PartThumb, 'tool-button': ToolButton, 'app-header': AppHeader, 'side-nav': SideNav, 'tab-strip': TabStrip, 'widget-title': WidgetTitle, 'main-toolbar': MainToolbar, 'structure-table': StructureTable, 'drone-view': DroneView, 'detail-panel': DetailPanel, 'config-popover': ConfigPopover, 'structure-widget': StructureWidget, 'plm-app': PlmApp })) customElements.define(tag, c);
</script>
</body>
</html>
